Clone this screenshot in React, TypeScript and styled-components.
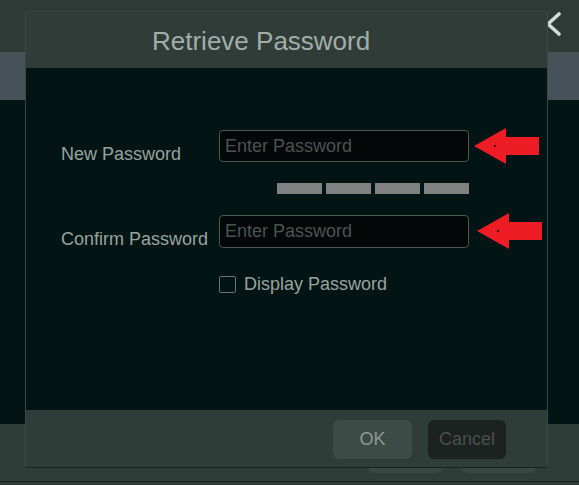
import styled, { createGlobalStyle } from "styled-components";

const GlobalStyle = createGlobalStyle`
  html, body {
    margin: 0;
    padding: 0;
    background: #021514;
  }
  * {
    box-sizing: border-box;
  }
`;

const FONT = `"Liberation Sans", Arial, sans-serif`;

export default function App() {
  return (
    <>
      <GlobalStyle />
      <Screen>
        <TopBar>
          <CloseIcon viewBox="0 0 26 24">
            <path d="M2 2 L24 22 M24 2 L2 22" />
          </CloseIcon>
        </TopBar>
        <TabBand />
        <Content />
        <PageFooter>
          <GhostButton />
          <GhostButton />
        </PageFooter>
        <FooterLine />

        <Dialog>
          <DialogHeader>
            <Title>Retrieve Password</Title>
          </DialogHeader>
          <DialogBody>
            <FieldRow>
              <Label $offset={16}>New Password</Label>
              <PasswordInput type="password" placeholder="Enter Password" $h={32} />
              <Arrow $gap={5} />
            </FieldRow>
            <Strength>
              <StrengthBar />
              <StrengthBar />
              <StrengthBar />
              <StrengthBar />
            </Strength>
            <FieldRow $top={19}>
              <Label $offset={16}>Confirm Password</Label>
              <PasswordInput type="password" placeholder="Enter Password" $h={33} />
              <Arrow $gap={8} />
            </FieldRow>
            <CheckRow>
              <CheckBox />
              <CheckText>Display Password</CheckText>
            </CheckRow>
          </DialogBody>
          <DialogFooter>
            <OkButton>OK</OkButton>
            <CancelButton>Cancel</CancelButton>
          </DialogFooter>
        </Dialog>
      </Screen>
    </>
  );
}

function Arrow({ $gap }: { $gap: number }) {
  return (
    <ArrowSvg $gap={$gap} viewBox="0 0 65 36">
      <polygon points="0,18 32,0 32,9 65,9 65,27 32,27 32,36" fill="#ee1c24" />
      <circle cx="21" cy="18" r="1.1" fill="#1a0000" />
    </ArrowSvg>
  );
}

const Screen = styled.div`
  position: relative;
  width: 579px;
  height: 485px;
  overflow: hidden;
  display: flex;
  flex-direction: column;
  font-family: ${FONT};
`;

const TopBar = styled.div`
  height: 52px;
  background: #2e3a36;
  display: flex;
  justify-content: flex-end;
  padding: 12px 18px 0 0;
`;

const CloseIcon = styled.svg`
  width: 26px;
  height: 24px;
  fill: none;
  stroke: #d3dad6;
  stroke-width: 3.6;
  stroke-linecap: round;
`;

const TabBand = styled.div`
  height: 48px;
  background: #46515a;
`;

const Content = styled.div`
  flex: 1;
  background: #021514;
`;

const PageFooter = styled.div`
  height: 57px;
  background: #2f3d38;
  display: flex;
  justify-content: flex-end;
  gap: 20px;
  padding: 9px 43px 0 0;
`;

const GhostButton = styled.div`
  width: 74px;
  height: 40px;
  border-radius: 6px;
  background: #394843;
`;

const FooterLine = styled.div`
  height: 4px;
  background: #2f3d38;
  border-top: 1px solid #17201e;
`;

const Dialog = styled.div`
  position: absolute;
  top: 11px;
  left: 25px;
  width: 523px;
  height: 457px;
  display: flex;
  flex-direction: column;
  border: 1px solid #3b4844;
  border-bottom: 1px solid #18221f;
  border-top-color: #34413d;
`;

const DialogHeader = styled.div`
  height: 56px;
  background: #2f3c38;
  display: flex;
  align-items: center;
  padding: 2px 0 0 126px;
`;

const Title = styled.div`
  font-size: 26px;
  color: #a3ada9;
`;

const DialogBody = styled.div`
  height: 342px;
  background: #021514;
  padding: 60px 0 0 35px;
  display: flex;
  flex-direction: column;
`;

const FieldRow = styled.div<{ $top?: number }>`
  display: flex;
  align-items: center;
  height: 36px;
  margin-top: ${(p) => p.$top ?? 0}px;
`;

const Label = styled.div<{ $offset: number }>`
  width: 158px;
  align-self: flex-start;
  margin-top: ${(p) => p.$offset}px;
  font-size: 18px;
  line-height: 20px;
  color: #98a39f;
  white-space: nowrap;
`;

const PasswordInput = styled.input<{ $h: number }>`
  width: 250px;
  height: ${(p) => p.$h}px;
  background: #030708;
  border: 1px solid #4c5754;
  border-radius: 4px;
  padding: 0 5px;
  font-family: ${FONT};
  font-size: 18px;
  color: #a0aaa6;
  outline: none;
  &::placeholder {
    color: #4b5451;
  }
`;

const ArrowSvg = styled.svg<{ $gap: number }>`
  width: 65px;
  height: 36px;
  margin-left: ${(p) => p.$gap}px;
  flex-shrink: 0;
`;

const Strength = styled.div`
  display: flex;
  gap: 4px;
  margin: 19px 0 0 216px;
`;

const StrengthBar = styled.div`
  width: 45px;
  height: 11px;
  background: #7f8281;
`;

const CheckRow = styled.div`
  display: flex;
  align-items: center;
  gap: 8px;
  margin: 26px 0 0 158px;
  height: 18px;
`;

const CheckBox = styled.div`
  width: 17px;
  height: 17px;
  border: 1.5px solid #6a7471;
  border-radius: 2px;
`;

const CheckText = styled.div`
  font-size: 18px;
  color: #98a39f;
`;

const DialogFooter = styled.div`
  flex: 1;
  background: #2f3d38;
  display: flex;
  justify-content: flex-end;
  gap: 16px;
  padding: 10px 41px 0 0;
`;

const FooterButton = styled.div`
  width: 79px;
  height: 39px;
  border-radius: 6px;
  display: flex;
  align-items: center;
  justify-content: center;
  font-size: 18px;
`;

const OkButton = styled(FooterButton)`
  background: #3c4b46;
  color: #8e9995;
`;

const CancelButton = styled(FooterButton)`
  width: 78px;
  background: #1c2220;
  color: #4a504e;
`;
